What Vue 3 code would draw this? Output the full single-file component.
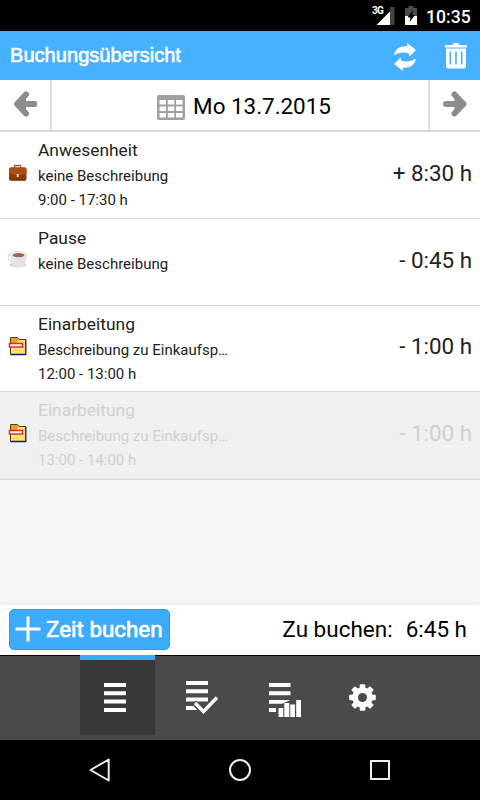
<template>
  <div class="screen">
    <div class="statusbar">
      <svg class="signal" width="27" height="20" viewBox="0 0 27 20">
        <path d="M18 5.500v13.500H4.500z" fill="#fff" />
        <path d="M18 1h4.500v18H18z" fill="#444" />
        <text x="0" y="8" class="network">3G</text>
      </svg>
      <svg class="battery" width="12" height="19" viewBox="0 0 12 19">
        <path d="M3.500 0h5v2H12v17H0V2h3.500z" fill="#4b4b4b" />
        <path d="M0 10h12v9H0z" fill="#fff" />
        <path d="M8 4 2.500 11.500h3L4.500 16l5.500-7H7.200z" fill="#000" />
      </svg>
      <span class="clock">10:35</span>
    </div>

    <header class="header">
      <h1>Buchungsübersicht</h1>
      <svg class="sync" width="24" height="30" viewBox="0 0 24 30">
        <path d="M1.200 13.500C2 6.500 8 3.500 14.500 4.500L14 1l9 7-6.500 6.500-.5-3C11 9.500 5 10.500 1.200 13.500z" />
        <path d="M22.800 16.500C22 23.500 16 26.500 9.500 25.500L10 29l-9-7 6.500-6.500.5 3C13 20.500 19 19.500 22.800 16.500z" />
      </svg>
      <svg class="trash" width="22" height="26" viewBox="0 0 22 26">
        <path d="M0 3q0-1 1-1h6.500q0-2 2-2h3q2 0 2 2H21q1 0 1 1v1.500H0z" />
        <path d="M1 5.500h20V23q0 2.500-2.500 2.500h-15Q1 25.500 1 23z" />
        <path d="M5.300 8.500v13M11 8.500v13M16.700 8.500v13" stroke="#46b1ff" stroke-width="1.600" />
      </svg>
    </header>

    <div class="datebar">
      <button class="step prev">
        <svg width="24" height="26" viewBox="0 0 24 26">
          <path d="M13 3.500 4 13l9 9.500" />
          <path d="M6 13h15.500" />
          <path d="M13 4v18L4 13z" class="head" />
        </svg>
      </button>
      <div class="day">
        <svg width="28" height="25" viewBox="0 0 28 25">
          <rect width="28" height="25" rx="2" fill="#a0a0a0" />
          <path
            v-for="y in [5, 11.5, 18]"
            :key="y"
            :d="`M2.500 ${y}h6.500v4.500h-6.500zM10.800 ${y}h6.500v4.500h-6.500zM19 ${y}h6.500v4.500h-6.500z`"
            fill="#fff"
          />
        </svg>
        <span>Mo 13.7.2015</span>
      </div>
      <button class="step next">
        <svg width="24" height="26" viewBox="0 0 24 26">
          <path d="M11.500 3.500l9 9.500-9 9.500" />
          <path d="M19 13H3" />
          <path d="M11.500 4v18l9-9z" class="head" />
        </svg>
      </button>
    </div>

    <ul class="list">
      <li v-for="b in bookings" :key="b.id" class="row" :class="{ disabled: b.disabled }">
        <svg v-if="b.icon === 'case'" class="icon" width="20" height="20" viewBox="0 0 20 20">
          <path d="M6.500 5V2.500h6V5" fill="none" stroke="#a25b32" stroke-width="1.300" />
          <rect x="1" y="4.500" width="17.500" height="13" rx="2" fill="#8f3a0c" />
          <path d="M1 10.500V6q0-1.500 1.500-1.500H17q1.500 0 1.500 1.500v4.500q-8.500 3-17.500 0z" fill="#aa4d17" />
          <path d="M1.500 17h16.500" stroke="#602407" />
          <rect x="8.700" y="11" width="2" height="3" fill="#f0d9c4" />
        </svg>
        <svg v-else-if="b.icon === 'cup'" class="icon" width="20" height="20" viewBox="0 0 20 20">
          <ellipse cx="10" cy="14.500" rx="8.500" ry="3" fill="#d2d2d2" />
          <ellipse cx="2.800" cy="7.500" rx="2.800" ry="3.500" fill="none" stroke="#d4d4d4" stroke-width="1.200" />
          <path d="M2.500 5.500q0 12 8 12t8-12z" fill="#e4e4e4" />
          <ellipse cx="10.500" cy="5.200" rx="8.200" ry="3.800" fill="#f3f3f3" stroke="#d0d0d0" stroke-width=".7" />
          <ellipse cx="10.500" cy="5.200" rx="6" ry="2.100" fill="#a0654c" />
        </svg>
        <svg v-else class="icon" width="20" height="20" viewBox="0 0 20 20">
          <path d="M2.500 18.500v-17h7l1.500 2h7v15z" fill="#ffe36a" />
          <path d="M3 2h6l1.500 2.500-3 3H3z" fill="#e6a11e" />
          <path d="M2.500 18.500v-17h7l1.500 2h7" fill="none" stroke="#5b3b15" />
          <path d="M17.800 4v14.500H2.500" fill="none" stroke="#17177e" stroke-width="1.300" />
          <rect x="1.500" y="7.500" width="13" height="3.500" fill="#fff" stroke="#f3261b" stroke-width="1.500" />
        </svg>
        <div class="info">
          <p class="title">{{ b.title }}</p>
          <p class="text">{{ b.text }}</p>
          <p class="time">{{ b.time }}</p>
        </div>
        <span class="hours">{{ b.hours }}</span>
      </li>
    </ul>

    <div class="summary">
      <button class="book">
        <svg width="26" height="26" viewBox="0 0 26 26">
          <path d="M13 .5v25M.5 13h25" stroke="#fff" stroke-width="3" />
        </svg>
        <span>Zeit buchen</span>
      </button>
      <span class="label">Zu buchen:</span>
      <span class="total">6:45 h</span>
    </div>

    <nav class="tabs">
      <a class="tab active">
        <svg width="28" height="36" viewBox="0 0 28 36">
          <path d="M0 3h22v4H0zM0 11.300h22v4H0zM0 19.600h22v4H0zM0 28h22v4H0z" />
        </svg>
      </a>
      <a class="tab">
        <svg width="32" height="36" viewBox="0 0 32 36">
          <path d="M0 0h22v4H0zM0 8.300h22v4H0zM0 16.600h22v4H0zM0 25h12v4H0z" />
          <path d="m8 21.500 9.500 9.500L31 16.500" fill="none" stroke="#4a4a4a" stroke-width="6" />
          <path d="m9 22 8.500 8.500L31 16.500" fill="none" stroke="#fff" stroke-width="3.500" />
        </svg>
      </a>
      <a class="tab">
        <svg width="34" height="36" viewBox="0 0 34 36">
          <path d="M0 2h21.500v4H0zM0 10.300h21.500v4H0zM0 19h21.500L13 22.700H0zM0 27h7v4H0z" />
          <path d="M9.500 27h4.800v9H9.500zM15.300 22h5v14h-5zM21.200 23.500H26v12.500h-4.800zM27.200 19H32v17h-4.800z" />
        </svg>
      </a>
      <a class="tab">
        <svg width="36" height="36" viewBox="0 0 36 36">
          <g transform="translate(13.500 16.500)">
            <rect
              v-for="a in [0, 45, 90, 135]"
              :key="a"
              x="-2.800"
              y="-13.300"
              width="5.600"
              height="26.600"
              rx="1"
              :transform="`rotate(${a})`"
            />
            <circle r="10.300" />
            <circle r="4.500" class="hole" />
          </g>
        </svg>
      </a>
    </nav>

    <div class="navbar">
      <svg width="24" height="26" viewBox="0 0 24 26">
        <path d="M20.700 2.500v21L2.500 13z" />
      </svg>
      <svg width="24" height="26" viewBox="0 0 24 26">
        <circle cx="12" cy="13" r="10" />
      </svg>
      <svg width="24" height="26" viewBox="0 0 24 26">
        <rect x="3" y="4" width="18" height="18" />
      </svg>
    </div>
  </div>
</template>

<script setup>
const bookings = [
  { id: 1, icon: 'case', title: 'Anwesenheit', text: 'keine Beschreibung', time: '9:00 - 17:30 h', hours: '+ 8:30 h' },
  { id: 2, icon: 'cup', title: 'Pause', text: 'keine Beschreibung', time: '', hours: '- 0:45 h' },
  { id: 3, icon: 'folder', title: 'Einarbeitung', text: 'Beschreibung zu Einkaufsp…', time: '12:00 - 13:00 h', hours: '- 1:00 h' },
  { id: 4, icon: 'folder', title: 'Einarbeitung', text: 'Beschreibung zu Einkaufsp…', time: '13:00 - 14:00 h', hours: '- 1:00 h', disabled: true },
];
</script>

<style>
body {
  margin: 0;
  background-color: #f8f8f8;
}
</style>

<style scoped>
.screen {
  display: flex;
  flex-direction: column;
  width: 480px;
  height: 800px;
  overflow: hidden;
  background-color: #f8f8f8;
  color: #222;
  font-family: Roboto, sans-serif;
}
svg {
  display: block;
  flex: none;
}
button {
  border: 0;
  font-family: inherit;
}
.statusbar {
  display: flex;
  align-items: center;
  height: 31px;
  padding-left: 372px;
  background-color: #000;
  color: #fff;
}
.signal {
  margin-top: 1px;
}
.network {
  fill: #fff;
  font-size: 10px;
  font-weight: 700;
  letter-spacing: -0.7px;
}
.battery {
  margin: 0 9px 0 6px;
}
.clock {
  font-size: 17.6px;
  font-weight: 500;
  padding-top: 2px;
  line-height: 24px;
}
.header {
  box-sizing: border-box;
  display: flex;
  align-items: center;
  height: 49px;
  padding: 0 13px 0 10px;
  background-color: #46b1ff;
  color: #fff;
  fill: #fff;
}
.header h1 {
  flex: 1;
  margin: 0;
  font-family: "Liberation Sans", sans-serif;
  font-size: 20px;
  font-weight: 400;
  letter-spacing: 0.05px;
  -webkit-text-stroke: 0.6px #fff;
}
.sync {
  margin: 3px 28px 0 0;
}
.trash {
  margin-top: 1px;
}
.datebar {
  display: flex;
  height: 50px;
  border-bottom: 2px solid #d9d9d9;
  background-color: #fff;
  color: #000;
}
.step {
  box-sizing: border-box;
  display: flex;
  width: 52px;
  padding: 11px 13px;
  background-color: #fff;
}
.step path {
  fill: none;
  stroke: #8c8c8c;
  stroke-width: 6;
  stroke-linecap: round;
  stroke-linejoin: round;
}
.step .head {
  fill: #8c8c8c;
  stroke: none;
}
.prev {
  border-right: 2px solid #dedede;
}
.next {
  border-left: 2px solid #dedede;
}
.day {
  flex: 1;
  display: flex;
  align-items: center;
  justify-content: center;
  gap: 8px;
  padding-top: 2px;
  padding-left: 8px;
  font-size: 22.4px;
}
.day svg {
  margin-top: 2px;
}
.list {
  flex: 1;
  margin: 0;
  padding: 0;
  list-style: none;
}
.row {
  box-sizing: border-box;
  display: flex;
  align-items: center;
  height: 87px;
  padding: 0 8px;
  border-bottom: 1px solid #d6d6d6;
  background-color: #fff;
}
.row:nth-child(2) {
  padding-top: 1px;
}
.row:nth-child(3) {
  height: 86px;
}
.row:nth-child(4) {
  height: 88px;
}
.row.disabled {
  background-color: #f0f0f0;
  color: #d0d0d0;
}
.icon {
  margin-bottom: 5px;
}
.info {
  flex: 1;
  align-self: flex-start;
  padding: 5px 0 0 10px;
}
.info p {
  margin: 0;
}
.title {
  font-size: 17.4px;
  line-height: 27px;
}
.text {
  font-size: 15px;
  line-height: 24px;
}
.time {
  font-size: 15px;
  line-height: 24px;
}
.hours {
  font-size: 22.4px;
  padding-bottom: 5px;
}
.summary {
  box-sizing: border-box;
  display: flex;
  align-items: center;
  height: 50px;
  padding: 0 13px 2px 9px;
  background-color: #fff;
  box-shadow: 0 -1px 5px #e6e6e6;
  color: #000;
  font-size: 22.5px;
}
.book {
  box-sizing: border-box;
  display: flex;
  align-items: center;
  gap: 5px;
  width: 161px;
  height: 41px;
  margin-right: auto;
  padding: 0 5px;
  border: 1px solid #1aa5ff;
  border-radius: 5px;
  background-color: #3daafb;
  color: #fff;
  font-size: 22.4px;
  white-space: nowrap;
  -webkit-text-stroke: 0.7px #fff;
}
.label,
.total {
  padding-bottom: 1px;
}
.label {
  margin-right: 13px;
}
.tabs {
  box-sizing: border-box;
  display: flex;
  height: 85px;
  padding-left: 80px;
  border-top: 1px solid #000;
  background-color: #4a4a4a;
  fill: #fff;
}
.tab {
  box-sizing: border-box;
  display: flex;
  justify-content: center;
  width: 75px;
  height: 79px;
  margin-right: 8px;
  padding-top: 25px;
}
.tab:nth-child(2) {
  padding-left: 3px;
}
.tab:nth-child(3) {
  padding-left: 5px;
}
.tab.active {
  height: 80px;
  margin-top: -1px;
  padding-top: 20px;
  border-top: 5px solid #35b0ff;
  background-color: #383838;
}
.hole {
  fill: #4a4a4a;
}
.navbar {
  display: flex;
  align-items: center;
  justify-content: center;
  gap: 116px;
  height: 60px;
  background-color: #000;
}
.navbar svg * {
  fill: none;
  stroke: #eee;
  stroke-width: 2;
  stroke-linejoin: round;
}
</style>
